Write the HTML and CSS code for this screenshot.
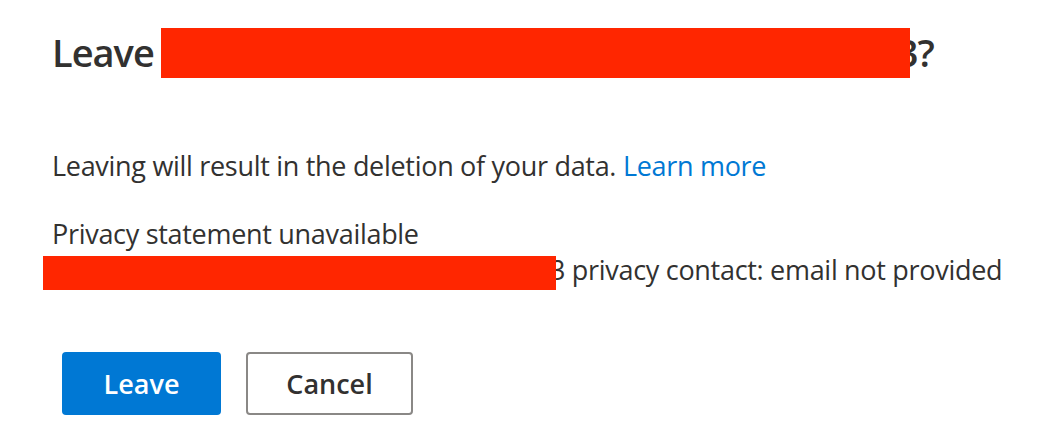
FILE: index.html
```html
<!DOCTYPE html>
<html lang="en">
<head>
<meta charset="utf-8">
<title>Leave</title>
<link rel="stylesheet" href="styles.css">
</head>
<body>
<div class="dialog">
  <h1 class="title">Leave <span class="redact redact-title"></span>3?</h1>
  <p class="text">Leaving will result in the deletion of your data. <a class="link" href="#">Learn more</a></p>
  <p class="text text-block">Privacy statement unavailable<br><span class="redact redact-line"></span>3 privacy contact: email not provided</p>
  <div class="actions">
    <button class="btn btn-primary">Leave</button>
    <button class="btn btn-default">Cancel</button>
  </div>
</div>
</body>
</html>
```
FILE: styles.css
```css
html, body {
  margin: 0;
  padding: 0;
  background: #ffffff;
}
body {
  font-family: "Open Sans", "Noto Sans", sans-serif;
  color: #323130;
}
.dialog {
  padding: 26px 0 0 52px;
}
.title {
  margin: 0;
  font-size: 38px;
  font-weight: 600;
  letter-spacing: -1px;
  line-height: 52px;
  color: #323130;
  white-space: nowrap;
}
.redact {
  display: inline-block;
  background: #ff2600;
  position: relative;
  z-index: 1;
}
.redact-title {
  width: 749px;
  height: 50px;
  vertical-align: -11px;
  margin-left: -2px;
  margin-right: -13px;
}
.text {
  margin: 70px 0 0 0;
  font-size: 27px;
  letter-spacing: -0.3px;
  line-height: 36px;
  white-space: nowrap;
}
.text-block {
  margin-top: 32px;
}
.redact-line {
  width: 513px;
  height: 34px;
  vertical-align: -10px;
  margin-left: -9px;
  margin-right: -6px;
}
.link {
  color: #0078d4;
  text-decoration: none;
}
.actions {
  display: flex;
  gap: 25px;
  margin: 62px 0 0 10px;
}
.btn {
  height: 63px;
  border-radius: 4px;
  font-family: inherit;
  font-size: 27px;
  font-weight: 600;
  padding: 0;
  cursor: pointer;
}
.btn-primary {
  width: 159px;
  background: #0078d4;
  color: #ffffff;
  border: none;
}
.btn-default {
  width: 167px;
  background: #ffffff;
  color: #323130;
  border: 2px solid #8a8886;
}
```
